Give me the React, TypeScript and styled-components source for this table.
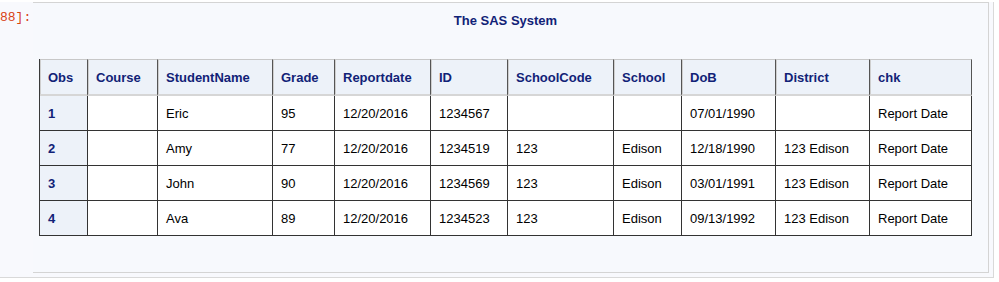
import React from 'react';
import styled, { createGlobalStyle } from 'styled-components';

const GlobalStyle = createGlobalStyle`
  body {
    margin: 0;
    background: #ffffff;
    font-family: "Liberation Sans", Arial, sans-serif;
  }
`;

const Frame = styled.div`
  margin-top: 2px;
  width: 993px;
  height: 275px;
  display: flex;
  align-items: flex-start;
  background: #f8f9fd;
  border-right: 1px solid #d9d9d9;
  border-bottom: 1px solid #d9d9d9;
`;

const Prompt = styled.div`
  width: 33px;
  box-sizing: border-box;
  padding-top: 8px;
  white-space: nowrap;
  font-family: "Liberation Mono", "DejaVu Sans Mono", monospace;
  font-size: 13px;
  line-height: 16px;
  color: #d84315;
`;

const OutputArea = styled.div`
  flex: 1;
  height: 269px;
  margin-right: 4px;
  border-top: 1px solid #d4d4d4;
  border-right: 1px solid #d4d4d4;
  border-bottom: 1px solid #d4d4d4;
  background: #f7f9fd;
`;

const Report = styled.div`
  display: inline-flex;
  flex-direction: column;
  align-items: center;
  margin-left: 6px;
`;

const Title = styled.div`
  padding-top: 10px;
  margin-bottom: 30px;
  font-size: 13px;
  line-height: 16px;
  font-weight: bold;
  color: #112277;
`;

const Table = styled.table`
  border-collapse: separate;
  border-spacing: 0;
  table-layout: fixed;
  width: 932px;
  border-left: 1px solid #3a3a3a;
  font-size: 13px;
`;

const HeadCell = styled.th<{ w: number }>`
  box-sizing: border-box;
  width: ${({ w }) => w}px;
  height: 37px;
  padding: 0 8px;
  text-align: left;
  font-weight: bold;
  color: #112277;
  background: #edf2f9;
  border-top: 1px solid #c8c8c8;
  border-bottom: 2px solid #d6d6d6;
  border-right: 1px solid #555555;
  box-shadow: inset 1px 0 0 #cfcfcf;
`;

const Cell = styled.td<{ obs?: boolean }>`
  box-sizing: border-box;
  height: 35px;
  padding: 0 8px;
  text-align: left;
  white-space: nowrap;
  color: ${({ obs }) => (obs ? '#112277' : '#000000')};
  font-weight: ${({ obs }) => (obs ? 'bold' : 'normal')};
  background: ${({ obs }) => (obs ? '#edf2f9' : '#ffffff')};
  border-bottom: 1px solid #333333;
  border-right: 1px solid #333333;
`;

const columns: [string, number][] = [
  ['Obs', 48],
  ['Course', 70],
  ['StudentName', 115],
  ['Grade', 62],
  ['Reportdate', 96],
  ['ID', 77],
  ['SchoolCode', 106],
  ['School', 68],
  ['DoB', 94],
  ['District', 94],
  ['chk', 102],
];

const rows: string[][] = [
  ['1', '', 'Eric', '95', '12/20/2016', '1234567', '', '', '07/01/1990', '', 'Report Date'],
  ['2', '', 'Amy', '77', '12/20/2016', '1234519', '123', 'Edison', '12/18/1990', '123 Edison', 'Report Date'],
  ['3', '', 'John', '90', '12/20/2016', '1234569', '123', 'Edison', '03/01/1991', '123 Edison', 'Report Date'],
  ['4', '', 'Ava', '89', '12/20/2016', '1234523', '123', 'Edison', '09/13/1992', '123 Edison', 'Report Date'],
];

const App: React.FC = () => {
  return (
    <>
      <GlobalStyle />
      <Frame>
        <Prompt>88]:</Prompt>
        <OutputArea>
          <Report>
            <Title>The SAS System</Title>
            <Table>
              <thead>
                <tr>
                  {columns.map(([name, w]) => (
                    <HeadCell key={name} w={w}>{name}</HeadCell>
                  ))}
                </tr>
              </thead>
              <tbody>
                {rows.map((row) => (
                  <tr key={row[0]}>
                    {row.map((val, i) => (
                      <Cell key={i} obs={i === 0}>{val}</Cell>
                    ))}
                  </tr>
                ))}
              </tbody>
            </Table>
          </Report>
        </OutputArea>
      </Frame>
    </>
  );
};

export default App;
